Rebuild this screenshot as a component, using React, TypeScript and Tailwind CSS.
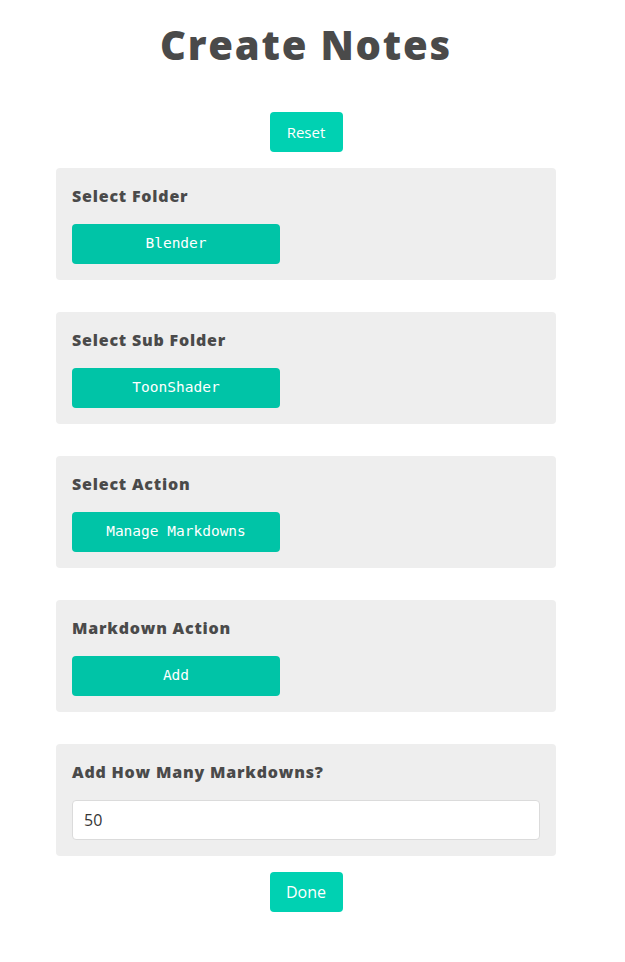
export default function App() {
  const sections = [
    { label: "Select Folder", value: "Blender" },
    { label: "Select Sub Folder", value: "ToonShader" },
    { label: "Select Action", value: "Manage Markdowns" },
    { label: "Markdown Action", value: "Add" },
  ];

  return (
    <div className="min-h-screen bg-white font-['Open_Sans',sans-serif] text-[#4a4a4a]">
      <div className="w-[500px] ml-[56px] flex flex-col items-center pt-[20px]">
        {/* Header */}
        <h1 className="text-[40px] leading-[50px] font-extrabold tracking-[1.8px] text-[#4a4a4a]">
          Create Notes
        </h1>

        <button className="mt-[42px] h-10 w-[73px] rounded bg-[#00d1b2] text-white text-[15px]">
          Reset
        </button>

        <div className="w-full mt-4 flex flex-col gap-8">
          {sections.map((s) => (
            <div key={s.label} className="bg-[#eeeeee] rounded p-4">
              <div className="text-[16px] leading-6 font-extrabold tracking-[0.8px]">{s.label}</div>
              <button className="mt-4 w-[208px] h-10 rounded bg-[#00c4a7] text-white text-[14.5px] font-['DejaVu_Sans_Mono',monospace]">
                {s.value}
              </button>
            </div>
          ))}

          <div className="bg-[#eeeeee] rounded p-4">
            <div className="text-[16px] leading-6 font-extrabold tracking-[0.8px]">Add How Many Markdowns?</div>
            <input
              defaultValue="50"
              className="mt-4 w-full h-10 px-[11px] bg-white border border-[#dbdbdb] rounded text-[16px] text-[#363636] outline-none"
            />
          </div>
        </div>

        <button className="mt-4 h-10 w-[73px] rounded bg-[#00d1b2] text-white text-[16px]">
          Done
        </button>
      </div>
    </div>
  );
}
